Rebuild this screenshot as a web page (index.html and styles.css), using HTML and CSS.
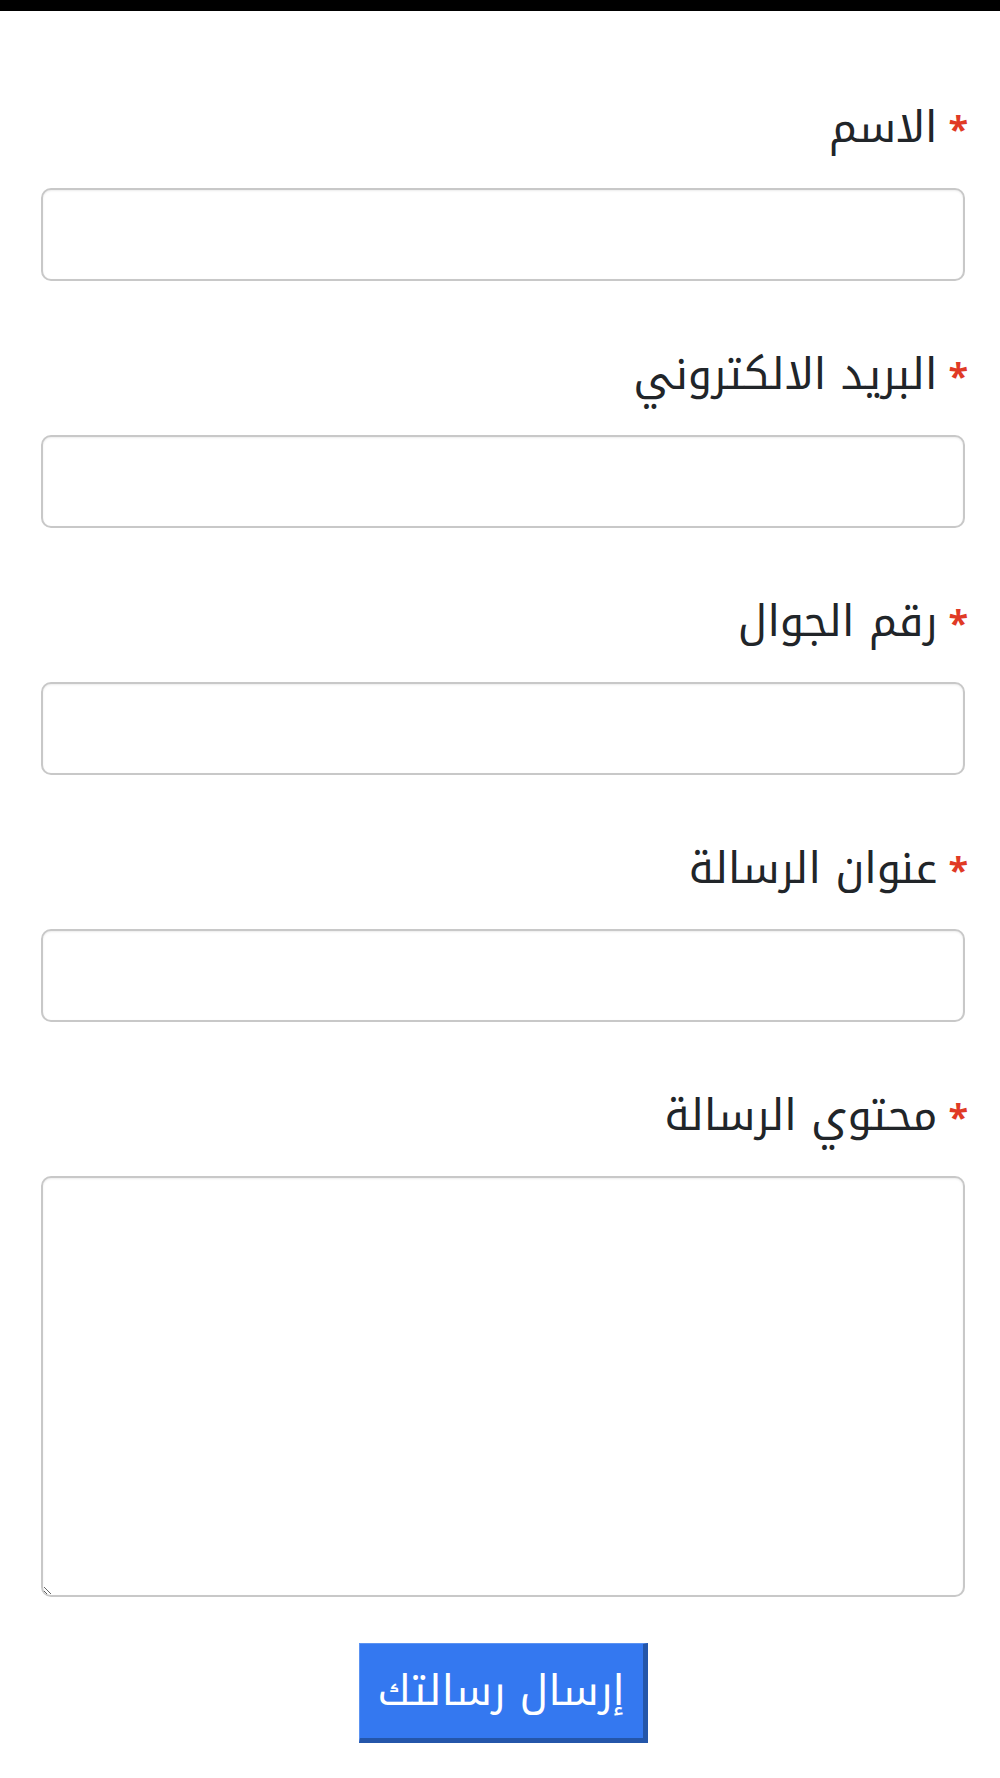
FILE: index.html
```html
<!DOCTYPE html>
<html lang="ar" dir="rtl">
<head>
<meta charset="utf-8">
<title>Contact</title>
<link rel="stylesheet" href="styles.css">
</head>
<body>
<div class="topbar"></div>
<form class="form">
  <div class="field">
    <label class="label"><span class="req">*</span>الاسم</label>
    <input class="input" type="text">
  </div>
  <div class="field">
    <label class="label"><span class="req">*</span>البريد الالكتروني</label>
    <input class="input" type="text">
  </div>
  <div class="field">
    <label class="label"><span class="req">*</span>رقم الجوال</label>
    <input class="input" type="text">
  </div>
  <div class="field">
    <label class="label"><span class="req">*</span>عنوان الرسالة</label>
    <input class="input" type="text">
  </div>
  <div class="field">
    <label class="label"><span class="req">*</span>محتوي الرسالة</label>
    <textarea class="input textarea"></textarea>
  </div>
  <div class="actions">
    <button class="submit" type="button">إرسال رسالتك</button>
  </div>
</form>
</body>
</html>
```

FILE: styles.css
```css
html, body {
  margin: 0;
  padding: 0;
  background: #ffffff;
}
body {
  font-family: "Noto Kufi Arabic", "Noto Sans Arabic", "DejaVu Sans", sans-serif;
  color: #212529;
}
.topbar {
  height: 11px;
  background: #000000;
}
.form {
  padding: 23px 35px 0 41px;
}
.field {
  display: flex;
  flex-direction: column;
}
.label {
  display: block;
  height: 60px;
  font-size: 43px;
  line-height: 60px;
  margin: 64px 0 30px 0;
  color: #212529;
  white-space: nowrap;
}
.req {
  color: #e03a25;
  font-weight: bold;
  font-size: 36px;
  margin-right: -3px;
  margin-left: 11px;
}
.input {
  box-sizing: border-box;
  width: 100%;
  height: 93px;
  border: 2px solid #c8c8c8;
  border-radius: 10px;
  box-shadow: inset 0 1px 2px rgba(0,0,0,0.08);
  background: #ffffff;
  margin: 0;
  font-size: 30px;
  font-family: inherit;
}
.textarea {
  height: 421px;
  resize: vertical;
  display: block;
}
.actions {
  display: flex;
  justify-content: center;
  padding-top: 46px;
}
.submit {
  box-sizing: border-box;
  width: 289px;
  height: 100px;
  background: #3478f0;
  color: #ffffff;
  border: none;
  border-right: 5px solid #2456aa;
  border-bottom: 5px solid #2456aa;
  border-left: 1px solid #5c93f2;
  border-top: 1px solid #5c93f2;
  font-family: inherit;
  font-size: 42px;
  padding: 0;
}
```
